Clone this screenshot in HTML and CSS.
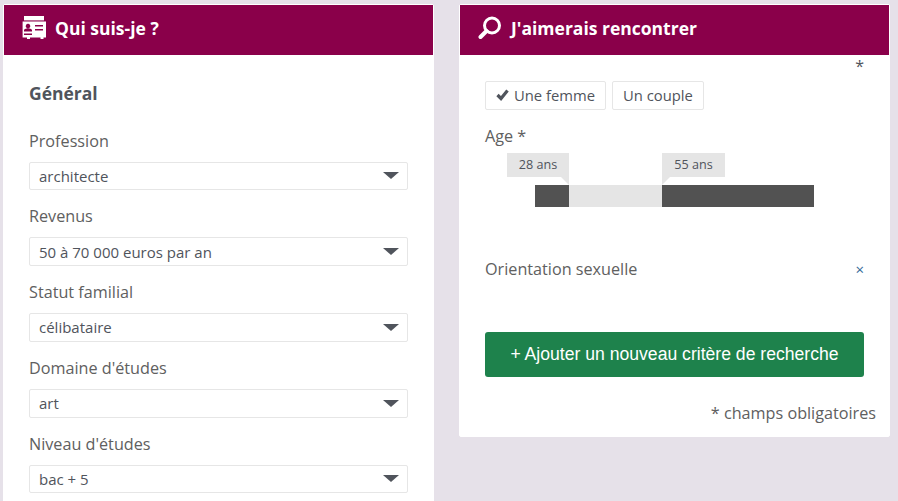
FILE: index.html
```html
<!DOCTYPE html>
<html lang="fr">
<head>
<meta charset="utf-8">
<title>Profil</title>
<link rel="stylesheet" href="styles.css">
</head>
<body>
<main class="page">
  <section class="panel panel-left">
    <header class="panel-head">
      <svg class="icon" width="24" height="24" viewBox="0 0 24 24"><path fill="#fff" d="M2 0h20v4.400H2z"/><path fill="#fff" fill-rule="evenodd" d="M.6 5.400H24v16h-2.500V23h-3v-1.600H8V23H5v-1.600H.6zM6 7.800a2.300 2.300 0 1 0 .01 0zM2 15.500h8v-1.300c0-1-1.500-1.700-4-1.700s-4 .7-4 1.700zM13 9v1.500h8V9zm0 4v1.500h8V13zM2 17.500V19h8v-1.500z"/></svg>
      <h2>Qui suis-je ?</h2>
    </header>
    <div class="panel-body">
      <h3>Général</h3>
      <div class="field"><label>Profession</label><div class="select"><span>architecte</span><i class="caret"></i></div></div>
      <div class="field"><label>Revenus</label><div class="select"><span>50 à 70 000 euros par an</span><i class="caret"></i></div></div>
      <div class="field"><label>Statut familial</label><div class="select"><span>célibataire</span><i class="caret"></i></div></div>
      <div class="field"><label>Domaine d'études</label><div class="select"><span>art</span><i class="caret"></i></div></div>
      <div class="field"><label>Niveau d'études</label><div class="select"><span>bac + 5</span><i class="caret"></i></div></div>
    </div>
  </section>
  <section class="panel panel-right">
    <header class="panel-head">
      <svg class="icon" width="24" height="24" viewBox="0 0 24 24"><circle cx="14" cy="9.500" r="7.500" fill="none" stroke="#fff" stroke-width="3"/><path d="M8.500 15L2.500 21" stroke="#fff" stroke-width="4" stroke-linecap="round"/></svg>
      <h2>J'aimerais rencontrer</h2>
    </header>
    <div class="panel-body-right">
      <div class="star">*</div>
      <div class="toggles">
        <span class="toggle"><svg width="13" height="12" viewBox="0 0 13 12"><path d="M1.500 6L5 9.500 11.500 1.500" fill="none" stroke="#50545c" stroke-width="3.200"/></svg>Une femme</span>
        <span class="toggle">Un couple</span>
      </div>
      <div class="age-label">Age *</div>
      <div class="slider">
        <div class="track">
          <div class="seg seg-dark seg-a"></div>
          <div class="seg seg-light seg-b"></div>
          <div class="seg seg-dark seg-c"></div>
          <div class="tip tip-left">28 ans</div>
          <div class="tip tip-right">55 ans</div>
        </div>
      </div>
      <div class="orientation"><span>Orientation sexuelle</span><span class="close">×</span></div>
      <button class="add" type="button">+ Ajouter un nouveau critère de recherche</button>
      <div class="note">* champs obligatoires</div>
    </div>
  </section>
</main>
</body>
</html>
```
FILE: styles.css
```css
* { box-sizing: border-box; }
html, body { margin: 0; height: 501px; overflow: hidden; }
body { background: #e6e1e9; font-family: "Open Sans", sans-serif; color: #555; }
.page { display: flex; align-items: flex-start; gap: 25px; padding: 4px 0 0 3px; }
.panel { background: #fff; border: 1px solid #fff; border-radius: 2px; }
.panel-left { width: 431px; height: 520px; }
.panel-right { width: 431px; height: 433px; }
.panel-head { height: 50px; background: #8a004a; display: flex; align-items: center; color: #fff; padding-bottom: 3px; }
.icon { margin-bottom: 1px; }
.panel-left .panel-head { padding-left: 18px; gap: 9px; }
.panel-right .panel-head { padding-left: 18px; gap: 9px; }
.panel-head h2 { margin: 0; font-size: 17.500px; font-weight: 700; line-height: 1; color: #fff; }
.panel-body { padding: 26px 25px 0; }
.panel-body h3 { margin: 0 0 24.600px; font-size: 17.500px; line-height: 24px; font-weight: 700; color: #50545c; }
.field { height: 75.750px; }
.field label { display: block; font-size: 16.200px; line-height: 22px; color: #606060; margin-bottom: 10px; }
.select { height: 28.750px; border: 1px solid #e6e6e6; border-radius: 2px; display: flex; align-items: center; justify-content: space-between; padding: 0 9px; font-size: 15px; color: #50545c; }
.caret { width: 0; height: 0; border-left: 8px solid transparent; border-right: 8px solid transparent; border-top: 7px solid #50545c; margin-right: -1px; }
.panel-body-right { padding: 0 25px; display: flex; flex-direction: column; }
.star { height: 26px; text-align: right; font-size: 16px; line-height: 22px; color: #50545c; }
.toggles { display: flex; gap: 6px; }
.toggle { height: 29px; border: 1px solid #e6e6e6; border-radius: 2px; padding: 0 10px 1px; display: flex; align-items: center; gap: 5px; font-size: 14.800px; color: #50545c; }
.age-label { margin-top: 15px; font-size: 16.200px; line-height: 22px; color: #606060; }
.slider { padding-top: 38px; }
.track { position: relative; height: 22px; margin-left: 50px; width: 279px; display: flex; }
.seg { height: 22px; }
.seg-dark { background: #525252; }
.seg-light { background: #e5e5e5; }
.seg-a { width: 34px; }
.seg-b { width: 93px; }
.seg-c { width: 152px; }
.tip { position: absolute; top: -32px; height: 24px; background: #e5e5e5; font-size: 12.600px; line-height: 24px; text-align: center; color: #50545c; }
.tip::after { content: ""; position: absolute; top: 24px; width: 0; height: 0; border-top: 8px solid #e5e5e5; }
.tip-left { left: -28px; width: 62px; }
.tip-left::after { right: 0; border-left: 8px solid transparent; }
.tip-right { left: 127px; width: 63px; }
.tip-right::after { left: 0; border-right: 8px solid transparent; }
.orientation { margin-top: 51px; display: flex; justify-content: space-between; font-size: 16.200px; line-height: 22px; color: #606060; }
.close { color: #336b99; font-size: 15px; }
.add { margin-top: 52px; height: 45px; width: 379px; border: 0; border-radius: 3px; background: #1e824c; color: #fff; font-family: "Liberation Sans", sans-serif; font-size: 17.600px; }
.note { margin: 25px -12px 0 0; text-align: right; font-size: 16.200px; line-height: 22px; color: #606060; }
```
